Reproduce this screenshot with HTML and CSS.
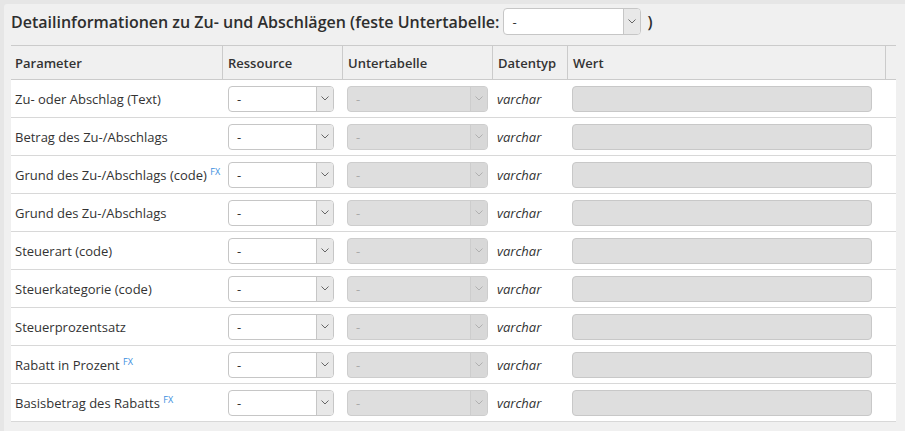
FILE: index.html
```html
<!DOCTYPE html>
<html lang="de">
<head>
<meta charset="utf-8">
<link rel="stylesheet" href="styles.css">
</head>
<body>
<div class="panel">
  <div class="title-row">
    <span class="title">Detailinformationen zu Zu- und Abschlägen (feste Untertabelle:</span>
    <div class="sel sel-title"><span class="sel-val">-</span><span class="sel-arrow"><svg width="8" height="5" viewBox="0 0 8 5"><path d="M0.5 0.5 L4 4 L7.5 0.5" fill="none" stroke="currentColor" stroke-width="1"/></svg></span></div>
    <span class="title">)</span>
  </div>
  <table class="grid">
    <thead>
      <tr>
        <th class="c-param">Parameter</th>
        <th class="c-res sep">Ressource</th>
        <th class="c-sub sep">Untertabelle</th>
        <th class="c-type sep">Datentyp</th>
        <th class="c-val sep">Wert</th>
        <th class="c-end sep"></th>
      </tr>
    </thead>
    <tbody id="rows"></tbody>
  </table>
</div>
<script src="app.js"></script>
</body>
</html>
```
FILE: app.js
```js
var rows = [
  ["Zu- oder Abschlag (Text)", false],
  ["Betrag des Zu-/Abschlags", false],
  ["Grund des Zu-/Abschlags (code)", true],
  ["Grund des Zu-/Abschlags", false],
  ["Steuerart (code)", false],
  ["Steuerkategorie (code)", false],
  ["Steuerprozentsatz", false],
  ["Rabatt in Prozent", true],
  ["Basisbetrag des Rabatts", true]
];
var arrow = '<span class="sel-arrow"><svg width="8" height="5" viewBox="0 0 8 5"><path d="M0.5 0.5 L4 4 L7.5 0.5" fill="none" stroke="currentColor" stroke-width="1"/></svg></span>';
var html = "";
rows.forEach(function (r) {
  html += '<tr>' +
    '<td class="c-param">' + r[0] + (r[1] ? ' <sup class="fx">FX</sup>' : '') + '</td>' +
    '<td class="c-res"><div class="sel sel-res"><span class="sel-val">-</span>' + arrow + '</div></td>' +
    '<td class="c-sub"><div class="sel sel-sub disabled"><span class="sel-val">-</span>' + arrow + '</div></td>' +
    '<td class="c-type"><em>varchar</em></td>' +
    '<td class="c-val"><div class="input"></div></td>' +
    '<td class="c-end"></td>' +
    '</tr>';
});
document.getElementById("rows").innerHTML = html;
```
FILE: styles.css
```css
html, body {
  margin: 0;
  padding: 0;
  background: #e6e6e6;
  font-family: "Open Sans", "Liberation Sans", sans-serif;
  color: #333;
}
.panel {
  margin: 4px 0 0 4px;
  padding: 0 9px 20px 7px;
  background: #f0f0f0;
  border-radius: 3px 0 0 0;
  width: 885px;
}
.title-row {
  display: flex;
  align-items: center;
  height: 27px;
  padding-top: 4px;
  margin-bottom: 10px;
  white-space: nowrap;
}
.title {
  font-size: 16px;
  font-weight: 600;
  color: #2e2e2e;
  flex: none;
}
.sel {
  display: flex;
  align-items: stretch;
  box-sizing: border-box;
  height: 26px;
  border: 1px solid #c6c6c6;
  border-radius: 4px;
  background: #fff;
  font-size: 13px;
  overflow: hidden;
}
.sel-title {
  flex: 0 0 138px;
  width: 138px;
  height: 27px;
  margin: 0 6px 0 4px;
}
.sel-val {
  flex: 1;
  display: flex;
  align-items: center;
  padding-left: 8px;
  color: #333;
}
.sel-arrow {
  flex: 0 0 16px;
  width: 16px;
  display: flex;
  align-items: center;
  justify-content: center;
  background: #e8e8e8;
  border-left: 1px solid #c6c6c6;
  color: #666;
}
.sel.disabled {
  background: #dedede;
  border-color: #cdcdcd;
}
.sel.disabled .sel-val { color: #aaa; }
.sel.disabled .sel-arrow {
  background: #d8d8d8;
  border-left-color: #cdcdcd;
  color: #b0b0b0;
}
.grid {
  border-collapse: separate;
  border-spacing: 0;
  width: 885px;
  table-layout: fixed;
}
.grid th {
  height: 35px;
  padding: 0 5px 0 4px;
  text-align: left;
  font-size: 13px;
  font-weight: 600;
  color: #333;
  border-top: 1px solid #cbcbcb;
  border-bottom: 1px solid #cbcbcb;
  background: #f0f0f0;
  white-space: nowrap;
}
.grid th.sep {
  border-left: 1px solid #cbcbcb;
  padding-left: 5px;
}
.grid td {
  height: 38px;
  padding: 0 0 0 5px;
  background: #fff;
  border-bottom: 1px solid #d8d8d8;
  font-size: 13px;
  color: #333;
  white-space: nowrap;
}
.grid td.c-param { padding-left: 4px; }
.c-param { width: 211px; box-sizing: border-box; }
.c-res { width: 120px; box-sizing: border-box; }
.c-sub { width: 150px; box-sizing: border-box; }
.c-type { width: 75px; box-sizing: border-box; }
.c-val { width: 318px; box-sizing: border-box; }
.c-end { width: 11px; box-sizing: border-box; }
.grid td.c-res { padding-left: 6px; }
.sel-res { width: 106px; }
.sel-sub { width: 141px; }
.grid td.c-type em { font-style: italic; }
.input {
  box-sizing: border-box;
  width: 300px;
  height: 26px;
  background: #dedede;
  border: 1px solid #c8c8c8;
  border-radius: 4px;
}
.fx {
  font-size: 9px;
  color: #3b8ede;
  vertical-align: 5px;
  line-height: 0;
}
```
